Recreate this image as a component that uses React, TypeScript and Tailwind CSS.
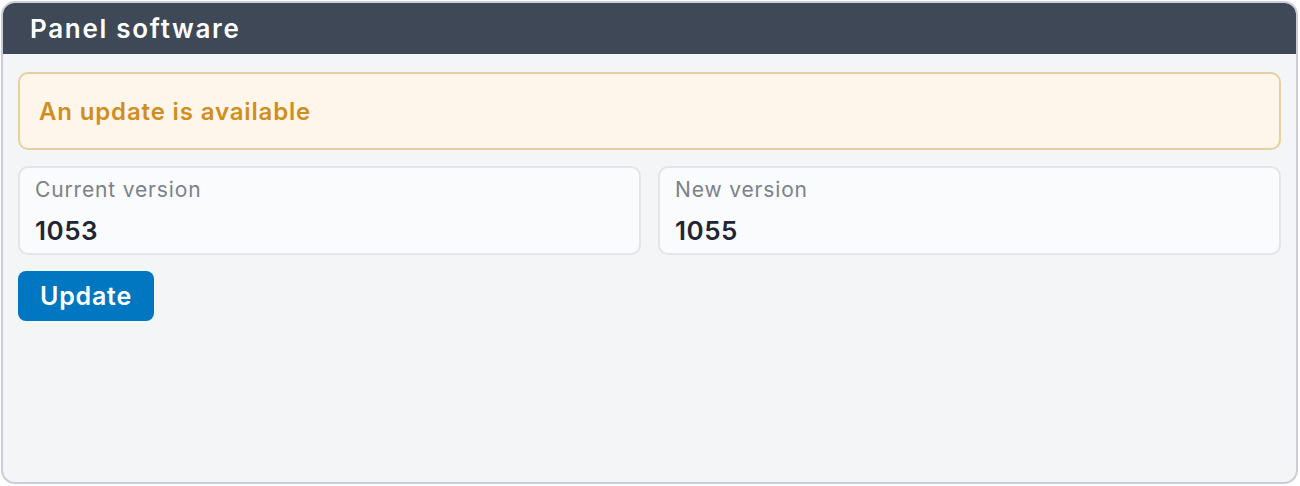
export default function App() {
  return (
    <div
      className="w-[1300px] h-[486px] pt-px pl-px pr-[2px] pb-[2px] bg-white"
      style={{ fontFamily: 'Inter, "Noto Sans", sans-serif' }}
    >
      <div className="h-full flex flex-col rounded-[14px] border-2 border-[#c9ced8] bg-[#f3f5f7] overflow-hidden">
        {/* header */}
        <div className="h-[51px] shrink-0 bg-[#3e4856] flex items-center px-[27px]">
          <h1 className="text-[26px] font-semibold tracking-[1.7px] text-white leading-none">Panel software</h1>
        </div>

        <div className="flex flex-col gap-4 px-[15px] pt-[18px]">
          {/* alert */}
          <div className="h-[78px] rounded-[10px] border-2 border-[#e6d09f] bg-[#fef6ea] flex items-center px-[19px]">
            <span className="text-[24px] font-semibold tracking-[0.85px] text-[#d08e1f] pt-px">An update is available</span>
          </div>

          {/* versions */}
          <div className="grid grid-cols-2 gap-[17px]">
            <VersionCard label="Current version" value="1053" />
            <VersionCard label="New version" value="1055" />
          </div>

          <div>
            <button className="h-[50px] w-[136px] rounded-[8px] bg-[#0077c0] text-white text-[25px] font-semibold tracking-[0.8px] leading-none">
              Update
            </button>
          </div>
        </div>
      </div>
    </div>
  );
}

function VersionCard({ label, value }: { label: string; value: string }) {
  return (
    <div className="h-[89px] rounded-[10px] border-2 border-[#e2e6eb] bg-[#f9fbfc] px-[15px] pt-[8px]">
      <div className="text-[21px] tracking-[0.85px] text-[#7b818b] leading-[28px]">{label}</div>
      <div className="text-[26px] font-semibold tracking-[0.5px] text-[#1e2533] leading-[30px] mt-[12px]">{value}</div>
    </div>
  );
}
